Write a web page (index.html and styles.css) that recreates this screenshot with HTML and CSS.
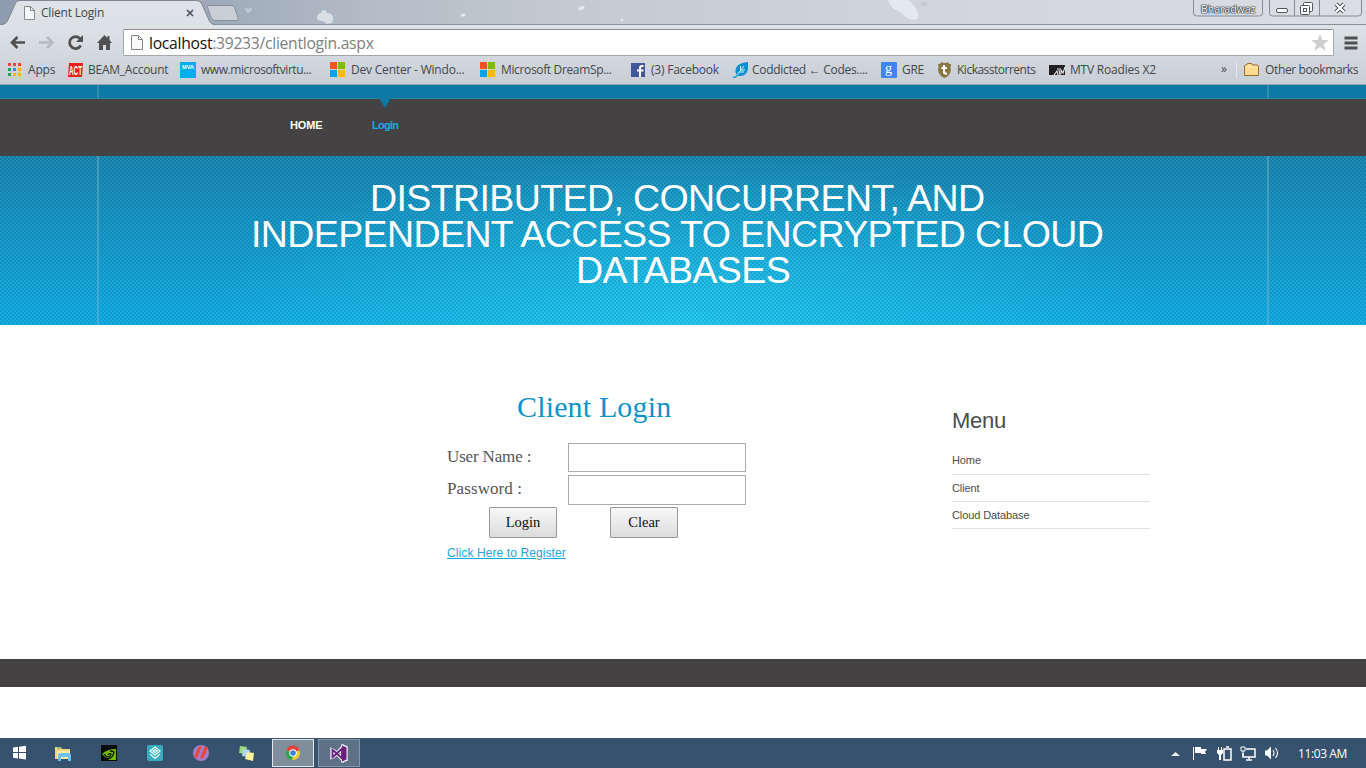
FILE: index.html
```
<!DOCTYPE html>
<html lang="en">
<head>
<meta charset="utf-8">
<title>Client Login</title>
<link rel="stylesheet" href="styles.css">
</head>
<body>
<div class="browser">
  <div class="titlebar">
    <svg class="theme" width="1366" height="25" viewBox="0 0 1366 25">
      <defs>
        <linearGradient id="sky"><stop offset="0" stop-color="#8f9caf"/><stop offset=".13" stop-color="#9ba6b6"/><stop offset=".28" stop-color="#b4bec8"/><stop offset=".42" stop-color="#c4cad2"/><stop offset=".7" stop-color="#d2d6dc"/><stop offset="1" stop-color="#dbdfe4"/></linearGradient>
        <linearGradient id="tabfill" x2="0" y2="1"><stop offset="0" stop-color="#dfe3e8"/><stop offset="1" stop-color="#dce1e6"/></linearGradient>
      </defs>
      <rect width="1366" height="25" fill="url(#sky)"/>
      <g fill="#e4e9ee">
        <path d="M245 8q2-1 3 1 2-2 4 0 0 2-4 4-3-2-3-5z" opacity=".45"/>
        <path d="M317 17q1-4 4-4 0-3 3-3 3 1 3 3 5 0 6 4 1 3-1 6l-6 1q-1-3-5-3-5-1-4-4z" opacity=".8"/>
        <ellipse cx="463" cy="15" rx="2.500" ry="1.600"/>
        <path d="M578 9q1-3 5-3 3 0 1 2-2 3-4 2z"/>
        <circle cx="622" cy="20" r="1.500"/>
        <path d="M888 0h19q6 3 8 7 4 7 3 12-7 2-12-2-5-5-12-8-5-4-6-9z"/>
        <ellipse cx="924" cy="4" rx="3" ry="2" fill="#bfc9cf"/>
      </g>
      <path d="M0 24.500h1366" stroke="#8b9199"/>
      <path d="M0 25c5 0 7-2 9-7l6-14c1-2 2-3 5-3h175c4 0 6 1 7 4l6 14c2 5 4 6 9 6z" fill="url(#tabfill)"/>
      <path d="M0 24.500c5 0 7-2 9-7l6-13c1-3 2-4 5-4h175c4 0 6 1 7 4l6 13c2 5 4 7 9 7" fill="none" stroke="#7f8791"/>
      <path d="M209 5.500h21c3 0 4 1 5 3l3 9c1 2 0 3-2 3h-20c-2 0-4-1-5-3l-3-9c-1-2-1-3 1-3z" fill="#c9ced7" stroke="#868e9c"/>
      <path d="M24.500 6.500h6l4 4v9h-10z" fill="#f6f7f8" stroke="#85888b"/><path d="M30.500 6.500v4h4" fill="none" stroke="#85888b"/>
      <path d="M187 10l6 6M193 10l-6 6" stroke="#4f5356" stroke-width="1.700"/>
      <path d="M1193.500 0v13q0 3 3 3h63q3 0 3-3V0M1269.500 0v13q0 3 3 3h86q3 0 3-3V0M1294.500 0v16M1319.500 0v16" fill="none" stroke="#848b94"/>
      <rect x="1276.500" y="8.500" width="11" height="4" rx="1.500" fill="#fff" stroke="#50565d"/>
      <g fill="#fff" stroke="#50565d"><rect x="1303.500" y="2.500" width="9" height="9" rx="1"/><rect x="1300.500" y="5.500" width="9" height="9" rx="1"/><rect x="1303.500" y="8.500" width="3" height="3"/></g>
      <path d="M1336 4l8 8M1344 4l-8 8" stroke="#50565d" stroke-width="4"/><path d="M1336 4l8 8M1344 4l-8 8" stroke="#fff" stroke-width="2"/>
    </svg>
    <span class="tabtitle">Client Login</span>
    <span class="profile">Bharadwaz</span>
  </div>
  <div class="toolbar">
    <svg class="nav" width="114" height="28" viewBox="0 0 114 28">
      <path d="M25 13.500H12M17.500 8L12 13.500l5.500 5.500" fill="none" stroke="#505050" stroke-width="2.600"/>
      <path d="M39 13.500h13M47 8l5.500 5.500L47 19" fill="none" stroke="#b6babd" stroke-width="2.600"/>
      <path d="M80 9.500a6 6 0 1 0 .8 7" fill="none" stroke="#505050" stroke-width="2.700"/><path d="M83 6v7h-7z" fill="#505050"/>
      <path d="M104.500 6l3 3V7h2v4l2.500 3h-2v7h-4v-5h-3v5h-4v-7h-2z" fill="#505050"/>
    </svg>
    <div class="omnibox">
      <svg width="14" height="17" viewBox="0 0 14 17"><path d="M.5 1.500h7l4 4v10H.5z" fill="#f8f8f8" stroke="#85888b"/><path d="M7.500 1.500v4h4" fill="none" stroke="#85888b"/></svg>
      <span class="url"><b>localhost</b>:39233/clientlogin.aspx</span>
      <svg class="star" width="18" height="18" viewBox="0 0 18 18"><path d="M9 0l2.400 6H18l-5.200 4.200 2 6.800L9 13l-5.800 4 2-6.800L0 6h6.600z" fill="#cdcfd1"/></svg>
    </div>
    <svg class="burger" width="14" height="14" viewBox="0 0 14 14"><path d="M.5 2h13M.5 7h13M.5 12h13" stroke="#505050" stroke-width="2.800"/></svg>
  </div>
  <div class="bookmarks">
    <div class="bm b1"><svg width="20" height="16" viewBox="0 0 20 16"><path fill="#e8433f" d="M0 1h3v3H0zM5 1h3v3H5zM10 1h3v3h-3z"/><path fill="#24a05a" d="M0 6h3v3H0zM0 11h3v3H0z"/><path fill="#3b83f0" d="M5 6h3v3H5z"/><path fill="#f8b50c" d="M10 6h3v3h-3zM5 11h3v3H5zM10 11h3v3h-3z"/></svg><span>Apps</span></div>
    <div class="bm b2"><svg width="20" height="16" viewBox="0 0 20 16"><path d="M1 1h14l-1 14H0z" fill="#e8221b"/><text class="act" x="1" y="13" textLength="13" lengthAdjust="spacingAndGlyphs">ACT</text></svg><span>BEAM_Account</span></div>
    <div class="bm b3"><svg width="21" height="16" viewBox="0 0 21 16"><path fill="#00adef" d="M0 0h16v16H0z"/><text class="mva" x="2" y="6.500" textLength="12" lengthAdjust="spacingAndGlyphs">MVA</text></svg><span>www.microsoftvirtu...</span></div>
    <div class="bm b4"><svg width="21" height="16" viewBox="0 0 21 16"><path fill="#f8511e" d="M0 0h7v7H0z"/><path fill="#80bb00" d="M8 0h7v7H8z"/><path fill="#00a3ee" d="M0 8h7v7H0z"/><path fill="#ffb900" d="M8 8h7v7H8z"/></svg><span>Dev Center - Windo...</span></div>
    <div class="bm b5"><svg width="21" height="16" viewBox="0 0 21 16"><path fill="#f8511e" d="M0 0h7v7H0z"/><path fill="#80bb00" d="M8 0h7v7H8z"/><path fill="#00a3ee" d="M0 8h7v7H0z"/><path fill="#ffb900" d="M8 8h7v7H8z"/></svg><span>Microsoft DreamSp...</span></div>
    <div class="bm b6"><svg width="20" height="16" viewBox="0 0 20 16"><path fill="#41599b" d="M0 1h14v14H0z"/><path d="M12.500 4h-1.500q-2 0-2 2v9M6 8.500h6.500" fill="none" stroke="#fff" stroke-width="2"/></svg><span>(3) Facebook</span></div>
    <div class="bm b7"><svg width="19" height="16" viewBox="0 0 19 16"><path d="M15 0v7q-1 6-7 7-4 0-5-2-2-7 4-10 4-2 8-2z" fill="#078fd3"/><path d="M0 15.500q4 0 6-5" fill="none" stroke="#0b9ad7" stroke-width="1.300"/><path d="M4 13l7-9M6 10h5M7.500 8V4M8 8h4" fill="none" stroke="#d8f0fa"/></svg><span>Coddicted ← Codes....</span></div>
    <div class="bm b8"><svg width="21" height="16" viewBox="0 0 21 16"><rect width="16" height="16" rx="1" fill="#4384f4"/><text class="gg" x="4" y="11">g</text></svg><span>GRE</span></div>
    <div class="bm b9"><svg width="20" height="16" viewBox="0 0 20 16"><path d="M1 2q3 0 3-2 4 2 7 0 0 2 3 2-1 4 0 6-1 6-6.500 8Q2 14 1 8q1-3 0-6z" fill="#8b7542"/><path d="M7 3v7q0 2 3 1.500M4.500 6H10" fill="none" stroke="#fff" stroke-width="2.200"/></svg><span>Kickasstorrents</span></div>
    <div class="bm b10"><svg width="21" height="16" viewBox="0 0 21 16"><path d="M0 3h16v10H0z" fill="#231f20"/><path d="M5 13l3-4 1 4M8 7h4M11 13l-1-5M12 12V8l2 3 2-6" fill="none" stroke="#e7eaed" stroke-width="1.100"/></svg><span>MTV Roadies X2</span></div>
    <span class="more">»</span>
    <div class="bm other"><svg width="21" height="16" viewBox="0 0 21 16"><path d="M.5 13.500V4l1-1h1l1-1.500h4l1 1.500h5l1 1v9.500z" fill="#ffdc91" stroke="#9b6825"/><path d="M1 5h13" stroke="#fff0be"/></svg><span>Other bookmarks</span></div>
  </div>
</div>
<main class="page">
  <div class="strip"></div>
  <nav class="menubar"><a class="navitem home">HOME</a><a class="navitem current">Login</a></nav>
  <header class="hero"><h1><span class="t1">DISTRIBUTED, CONCURRENT, AND</span><span class="t2">INDEPENDENT ACCESS TO ENCRYPTED CLOUD</span><span class="t3">DATABASES</span></h1></header>
  <div class="content">
    <section class="login">
      <h2>Client Login</h2>
      <div class="row"><label class="user" for="u">User Name :</label><input id="u" type="text"></div>
      <div class="row second"><label class="pass" for="p">Password :</label><input id="p" type="password"></div>
      <div class="buttons"><button>Login</button><button>Clear</button></div>
      <a class="register">Click Here to Register</a>
    </section>
    <aside class="side"><h3>Menu</h3><ul><li>Home</li><li>Client</li><li>Cloud Database</li></ul></aside>
  </div>
  <footer class="foot"></footer>
</main>
<div class="taskbar">
  <svg width="362" height="30" viewBox="0 0 362 30">
    <path d="M13 9.500l5-.7V14h-5zM19 8.700l7-1V14h-7zM13 15h5v5.500l-5-.7zM19 15h7v6.500l-7-1z" fill="#fff"/>
    <path d="M55 9h6l1 2h8v10H55z" fill="#f1d680"/><path d="M57 10h4" stroke="#4aa36a"/><path d="M57 13h13v8H57z" fill="#f9e9ab"/><path d="M58 23v-6q0-2 2-2h9q2 0 2 2v6h-3v-4h-7v4z" fill="#6fc0ee"/>
    <path d="M101 7h16v16h-16z" fill="#070a07"/><path d="M102 16q5-5 14-5v11h-8l1-2q-4 0-7-4z" fill="#76b900"/><path d="M104 16q2 3 5 3 2-1 2-3-2-1-3 1M110 13q3 0 4 1-1 6-6 7" fill="none" stroke="#0b1407" stroke-width="1.300"/>
    <rect x="147" y="7" width="16" height="16" rx="2" fill="#3aadbd"/><path d="M155 9l5 4-5 4-5-4zM150 16l5 4.500 5-4.500M153 13l2-1.500 2 1.500-2 1.500z" fill="none" stroke="#e9ffff" stroke-width="1.200"/>
    <circle cx="201" cy="15" r="8" fill="#a47fc7"/><path d="M194 19l4-9q1-2 3-2h1l-5 12q-1 1-3-1zM200 20l4-10q1-2 4-1l-4 10q-1 2-4 1z" fill="#e8473e"/>
    <path d="M240 8l7 1-1 7-7-1z" fill="#9bd782"/><path d="M243 11l7 1-1 7-7-1z" fill="#a8d7f7"/><path d="M247 14l7 1-1 8-8-2z" fill="#fff09a"/>
    <rect x="272.500" y="1.500" width="41" height="27" fill="#808d9b" stroke="#e3e7ea"/>
    <circle cx="293" cy="15" r="7" fill="#edc839"/><path d="M293 15l-6.500-3a7 7 0 0 1 13 0z" fill="#df4537"/><path d="M286.500 12a7 7 0 0 0 5 10l3-6-3-1z" fill="#26a34e"/><circle cx="293" cy="15" r="3.800" fill="#fff"/><circle cx="293" cy="15" r="2.800" fill="#3d83de"/>
    <rect x="318.500" y="1.500" width="41" height="27" fill="#5e7186" stroke="#8795a4"/>
    <g fill="none" stroke="#eee8f2" stroke-width="3.500"><path d="M332 12v7l2-1 8-8v11l-8-8z"/><path d="M343 8.500l3 1v12l-3 1z"/></g>
    <path d="M332.500 12v7l1.500-1 8-7.500v10l-8-7.500z" fill="none" stroke="#68217a" stroke-width="1.800"/><path d="M342 7.500l4.500 2v12l-4.500 2z" fill="#68217a"/>
  </svg>
  <div class="tray">
    <svg width="120" height="30" viewBox="0 0 120 30">
      <path d="M11 18l4.500-4 4.500 4z" fill="#e9eef3"/>
      <path d="M33.500 9v13" stroke="#fff"/><path d="M35 9h6v6h-6zM41 11h6l-2 3 1 2h-5z" fill="#fff"/>
      <path d="M64 11h7v11h-7zM66 9h3" fill="none" stroke="#fff" stroke-width="1.500"/><path d="M57 12h6v3l-2 2v5h-2v-5l-2-2zM58 9h1v3h-1zM61 9h1v3h-1z" fill="#fff"/>
      <path d="M86 11h9v8h-12v-4M89 19v3M86 22h6" fill="none" stroke="#fff" stroke-width="1.500"/><path d="M81 9h4v4h-4zM83 13v5" fill="none" stroke="#fff"/>
      <path d="M105 12.500h2l4-4v13l-4-4h-2z" fill="#fff"/><path d="M113 12q2 3 0 6M115.500 10q4 5 0 10" fill="none" stroke="#fff" stroke-width="1.100"/>
    </svg>
    <span class="clock">11:03 AM</span>
  </div>
</div>
</body>
</html>
```
FILE: styles.css
```
* { box-sizing: border-box; }
body { margin: 0; width: 1366px; height: 768px; overflow: hidden; background: #fff; font-family: "Liberation Sans", Arial, sans-serif; display: flex; flex-direction: column; }
svg { display: block; flex: none; }
h1, h2, h3, ul { margin: 0; padding: 0; font-weight: 400; }
.browser { height: 85px; flex: none; background: linear-gradient(#dee3e7 25px, #c8ced5 84px); border-bottom: 1px solid #9ba3ab; font-family: "Open Sans", "Noto Sans", sans-serif; color: #43474b; }
.titlebar { height: 25px; position: relative; }
.tabtitle { position: absolute; left: 41px; top: 5px; font-size: 12px; line-height: 16px; letter-spacing: -.2px; }
.profile { position: absolute; left: 1201px; top: 2px; font-size: 10.500px; line-height: 14px; color: #fff; text-shadow: 0 0 1px #222, 0 0 1px #222, 0 0 1px #222, 0 0 2px #333; }
.toolbar { height: 36px; padding-top: 4px; display: flex; }
.nav { margin-right: 9px; }
.omnibox { width: 1211px; height: 27px; background: #fff; border: 1px solid #a2a7ac; border-top-color: #888e94; border-radius: 2px; display: flex; align-items: center; padding: 0 4px 0 7px; }
.url { font-size: 15.700px; line-height: 22px; color: #808080; margin-left: 4px; white-space: nowrap; letter-spacing: -.28px; }
.url b { font-weight: 400; color: #111; }
.star { margin-left: auto; }
.burger { margin: 7px 0 0 10px; }
.bookmarks { height: 23px; display: grid; grid-template-columns: 60px 112px 150px 150px 151px 102px 148px 56px 112px 171px 17px 1fr; padding: 0 0 0 8px; font-size: 12px; line-height: 16px; }
.bm { display: flex; align-items: center; height: 17px; white-space: nowrap; }
.b1 span { letter-spacing: -.2px; }
.b2 span { letter-spacing: -.25px; }
.b3 span { letter-spacing: -.43px; }
.b4 span { letter-spacing: -.2px; }
.b5 span, .b9 span { letter-spacing: -.35px; }
.b6 span { letter-spacing: -.22px; }
.b7 span { letter-spacing: -.3px; }
.b8 span { letter-spacing: -.3px; }
.b9 span { letter-spacing: -.5px; }
.b10 span { letter-spacing: -.2px; }
.more { line-height: 16px; margin-left: 1px; }
.other { margin-left: -1px; padding-left: 7px; border-left: 1px solid #e4e8eb; letter-spacing: -.36px; }
.act { font: bold 12px "Liberation Sans", sans-serif; fill: #fff; }
.mva { font: bold 6px "Liberation Sans", sans-serif; fill: #fff; }
.gg { font: 14px "Liberation Serif", serif; fill: #fff; }
.page { height: 653px; flex: none; }
.strip { height: 14px; background: linear-gradient(90deg, transparent 97px, #2e8db0 97px 99px, transparent 99px 1267px, #2e8db0 1267px 1269px, transparent 1269px), #0e79a4; border-bottom: 1px solid #2387ac; }
.menubar { height: 57px; background: #444243; display: flex; }
.navitem { font-size: 11px; font-weight: 700; line-height: 13px; padding-top: 20px; color: #fff; }
.home { margin-left: 290px; width: 82px; letter-spacing: -.15px; }
.current { color: #18a9e6; position: relative; letter-spacing: -.75px; }
.current::before { content: ""; position: absolute; left: 7px; top: -1px; border: 6px solid transparent; border-top: 10px solid #0e79a4; border-bottom: 0; }
.hero { height: 169px; padding-top: 24px; background: linear-gradient(90deg, transparent 97px, #88b8c766 97px 99px, transparent 99px 1267px, #88b8c766 1267px 1269px, transparent 1269px), repeating-conic-gradient(#005b8b24 0 25%, #ffffff12 0 50%) 0 0 / 4px 4px, radial-gradient(ellipse 480px 170px at 683px 169px, #22cff0b8, transparent), linear-gradient(#1380ab, #0ba9e0); }
h1 { color: #fff; font-size: 37.500px; line-height: 36px; letter-spacing: -.6px; display: flex; flex-direction: column; }
h1 span { white-space: nowrap; }
.t1 { margin-left: 370px; }
.t2 { margin-left: 251px; }
.t3 { margin-left: 576px; }
.content { height: 334px; display: flex; }
.login { width: 505px; margin-left: 447px; padding-top: 64px; }
h2 { font-family: "Liberation Serif", serif; font-size: 30px; line-height: 36px; color: #0c94ca; margin-left: 70px; letter-spacing: .15px; }
.row { display: flex; height: 29px; margin-top: 18px; }
.second { margin-top: 3px; height: 30px; }
label { width: 121px; font: 17px/28px "Liberation Serif", serif; color: #555; }
.user { letter-spacing: -.15px; }
.pass { letter-spacing: .1px; }
input { width: 178px; border: 1px solid #a9a9a9; background: #fff; padding: 0; }
.buttons { display: flex; gap: 53px; margin: 2px 0 0 42px; }
button { width: 68px; height: 31px; border: 1px solid #999; border-radius: 1px; background: linear-gradient(#f8f8f8, #dcdcdc); font: 14.500px "Liberation Serif", serif; color: #111; padding: 0; }
.register { display: block; font-size: 12px; line-height: 16px; margin-top: 7px; color: #14a9e0; text-decoration: underline; letter-spacing: .1px; }
.side { width: 198px; padding-top: 83px; color: #4c4c4c; }
h3 { font-size: 22px; line-height: 26px; letter-spacing: -.3px; }
ul { list-style: none; padding-top: 13px; }
li { font-size: 11px; line-height: 26px; height: 27px; border-bottom: 1px solid #dfdfdf; letter-spacing: -.1px; }
li:first-child { height: 28px; }
.foot { height: 28px; background: #434142; }
.taskbar { height: 30px; background: #37526f; display: flex; justify-content: space-between; }
.tray { width: 206px; height: 30px; display: flex; align-items: center; }
.clock { font: 12px/18px "Open Sans", sans-serif; color: #fff; margin: 2px 0 0 18px; white-space: nowrap; letter-spacing: -.4px; }
```
